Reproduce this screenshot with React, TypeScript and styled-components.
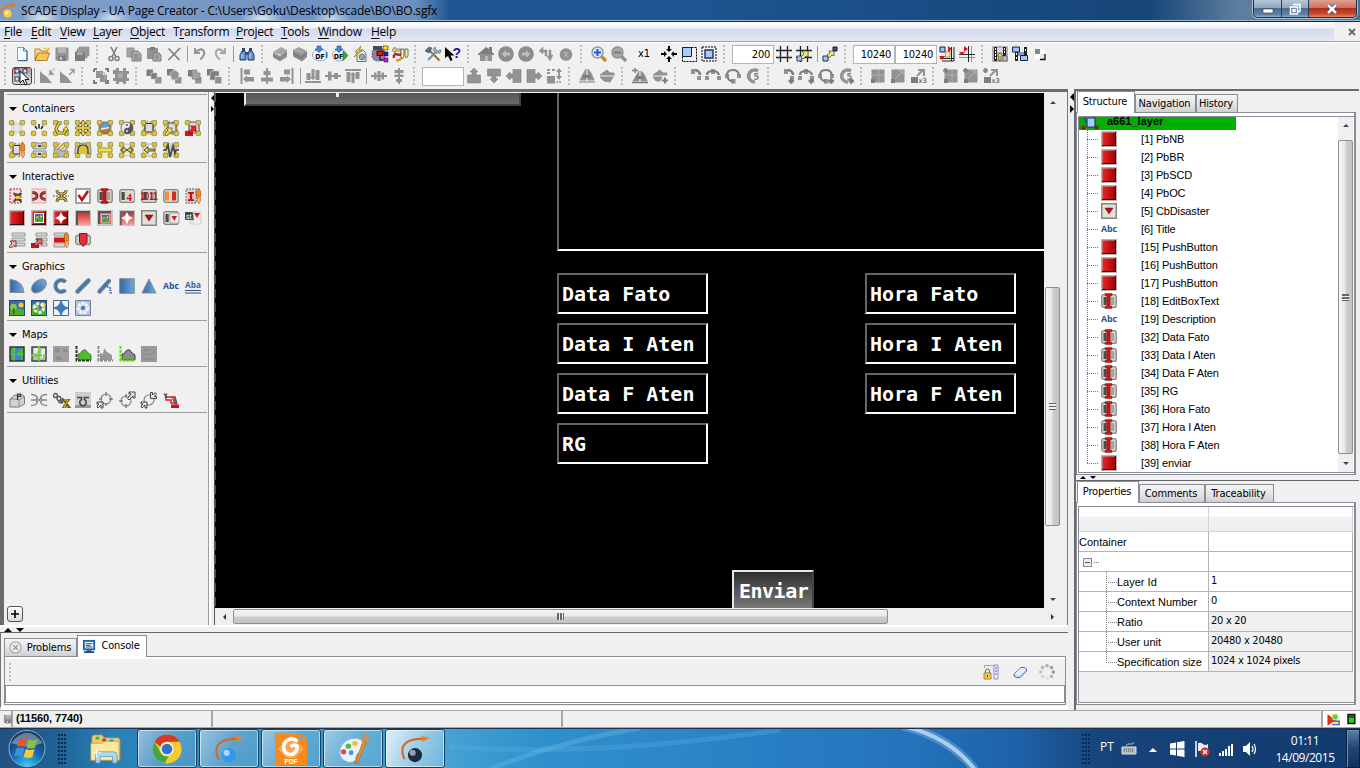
import React from 'react';
import styled, { createGlobalStyle, css } from 'styled-components';

const Global = createGlobalStyle`
  * { box-sizing: border-box; }
  html, body { margin: 0; padding: 0; overflow: hidden; background: #f0f0f0; }
  body { font-family: "DejaVu Sans Condensed", "DejaVu Sans", sans-serif; font-size: 11px; color: #000; }
`;

const UI = '"DejaVu Sans Condensed", "DejaVu Sans", sans-serif';
const SEGOE = '"Open Sans", "Noto Sans", sans-serif';
const ARIAL = '"Liberation Sans", Arial, sans-serif';

/* ---------- icon drawings, all on a 16x16 grid ---------- */

const G = '#939393';
const D = '#7d7d7d';
const B = '#3f78b8';

const Corners = ({ c = '#dcc636' }: { c?: string }) => (
  <g fill={c} stroke="#8f8458" strokeWidth=".8">
    <rect x=".4" y=".4" width="4.4" height="4.4" rx=".8" />
    <rect x="11.2" y=".4" width="4.4" height="4.4" rx=".8" />
    <rect x=".4" y="11.2" width="4.4" height="4.4" rx=".8" />
    <rect x="11.2" y="11.2" width="4.4" height="4.4" rx=".8" />
  </g>
);

const Hatch = () => (
  <>
    <path d="M1 1h14v14H1z" fill="#f1ead0" />
    <path d="M1 7 7 1M1 11 11 1M1 15 15 1M5 15 15 5M9 15l6-6" stroke="#b99a3c" strokeWidth="1.3" fill="none" />
  </>
);

const Grad = ({ id, a, b, h }: { id: string; a: string; b: string; h?: boolean }) => (
  <linearGradient id={id} x1="0" y1="0" x2={h ? '1' : '0'} y2={h ? '0' : '1'}>
    <stop offset="0" stopColor={a} />
    <stop offset="1" stopColor={b} />
  </linearGradient>
);

const EditFrame = () => (
  <>
    <rect x=".8" y="1.6" width="14.4" height="12.8" rx="2" fill="#dcdcd4" stroke="#85857c" strokeWidth="1.3" />
    <rect x="2.5" y="4" width="3.2" height="8" fill="#4c4c48" />
    <rect x="9.5" y="4" width="3.8" height="8" fill="#a4a49c" />
  </>
);

const Picture = ({ x = 0, y = 0, s = 1 }: { x?: number; y?: number; s?: number }) => (
  <g transform={`translate(${x} ${y}) scale(${s})`}>
    <path d="M0 0h16v16H0z" fill="#3b6ea8" />
    <path d="M0 10q8-3 16 0v6H0z" fill="#4fae28" />
    <circle cx="12" cy="5" r="2.5" fill="#ffc53a" />
    <circle cx="4.5" cy="7" r="3.3" fill="#7fcf4a" />
    <path d="M4 8h1.500v6H4z" fill="#66471c" />
  </g>
);

const RedSq = () => (
  <>
    <path d="M0 0h16v16H0z" fill="#b5b5ad" />
    <path d="M15 1v14H1v-1h13V1z" fill="#301010" />
    <path d="M1.500 1.500h12.500V14H1.500z" fill="url(#gRed)" />
  </>
);

const Star = ({ f = '#fff', s = 1 }: { f?: string; s?: number }) => (
  <path transform={`translate(${8 - 8 * s} ${8 - 8 * s}) scale(${s})`} d="M8 2 10 6 14 8 10 10 8 14 6 10 2 8 6 6z" fill={f} />
);

const Pair = ({ a, b }: { a: [number, number]; b: [number, number] }) => (
  <>
    <rect x={a[0]} y={a[1]} width="6.5" height="6.5" fill={D} />
    <rect x={b[0]} y={b[1]} width="6.5" height="6.500" fill={G} />
  </>
);

const Brush = () => (
  <>
    <path d="M13.500 0l2 3v6h-4V3z" fill="#f08820" stroke="#a04a08" strokeWidth=".6" />
    <path d="M12 10h3.500v3l-1.700 3L12 13z" fill="#f5b868" stroke="#a04a08" strokeWidth=".5" />
  </>
);

const icons: Record<string, React.ReactNode> = {
  newDoc: (<><path d="M3.500 1.500h6l3.500 3.500v9.500h-9.500z" fill="#f5f9ff" stroke="#8a9ab4" /><path d="M9.500 1.500v3.500H13z" fill="#c9daef" stroke="#4f6f9c" strokeWidth=".8" /><path d="M13 5v9.700H4" stroke="#2f5a8c" fill="none" /></>),
  open: (<><path d="M1 5V3h5l1 2h6v3H4l-3 6z" fill="#fbd983" stroke="#9c6a1e" strokeWidth=".8" /><path d="M1 14.500 4 7h11.500L13 14.500z" fill="#f9c64f" stroke="#9c6a1e" strokeWidth=".8" /><path d="M9 3.500q3-3 5 .5M14.500 2v2.500H12" stroke="#e5a93a" fill="none" /></>),
  save: (<><path d="M1.500 1.500h13v13h-13z" fill={G} /><path d="M4 2h8v5H4z" fill="#b4b4b4" /><path d="M4 10h8v5H4z" fill={D} /><path d="M6 11h2v3H6z" fill="#ccc" /></>),
  saveAll: (<><path d="M5 1h10v9H5z" fill="#a2a2a2" stroke={D} strokeWidth=".6" /><path d="M3 3h10v9H3z" fill="#a2a2a2" stroke={D} strokeWidth=".6" /><path d="M1 5.500h10V15H1z" fill={D} /><path d="M3 6h6v3H3z" fill="#a8a8a8" /></>),
  cut: (<><path d="M5 1l5 10M11 1 6 11" stroke={D} strokeWidth="1.600" /><circle cx="5" cy="12.500" r="2" fill="none" stroke={D} strokeWidth="1.500" /><circle cx="11" cy="12.500" r="2" fill="none" stroke={D} strokeWidth="1.500" /></>),
  copy: (<><path d="M1 2h7v9H1z" fill="#a4a4a4" stroke={G} /><path d="M6 5h6l3 3v7H6z" fill="#acacac" stroke={D} /><path d="M8 9h5M8 11h5M8 13h5" stroke={D} /></>),
  paste: (<><path d="M1 2h11v11H1z" fill={G} /><path d="M4 1h5v3H4z" fill={D} /><path d="M7 7h6l2 2v6H7z" fill="#acacac" stroke={D} /><path d="M9 10h4M9 12h4" stroke={D} /></>),
  del: <path d="M2.500 2.500 13.500 14M14 2 2.500 14" stroke={D} strokeWidth="1.700" />,
  undo: <path d="M3 2v5h5M3.500 6.500Q8 1.500 11.500 4.500Q14 9 8 13.500" stroke={G} strokeWidth="2" fill="none" />,
  redo: <path d="M13 2v5H8M12.500 6.500Q8 1.500 4.500 4.500Q2 9 8 13.500" stroke="#a8a8a8" strokeWidth="2" fill="none" />,
  find: (<><path d="M3 2h3v3H3zM10 2h3v3h-3z" fill="#2c4a7c" /><path d="M3 5h3l1 3v6H1V9zM10 5h3l2 4v5H9V8z" fill="#6d95cc" stroke="#223e6c" strokeWidth="1" /><path d="M6 6h4v3H6z" fill="#31538c" /><path d="M3 8v4M11 8v4" stroke="#d5e5fa" /></>),
  cubeStack: (<><path d="M1 6l8-5 6 3-6 5z" fill="#a6a6a6" /><path d="M1 6l7 4 7-6v7l-7 4.500-7-4z" fill={G} /><path d="M1 9l7 4 7-6" stroke="#777" fill="none" /></>),
  cubeStack2: (<><path d="M1 4l6-3 8 4-6 5z" fill="#a2a2a2" /><path d="M1 4l8 5 6-4v6l-5 4.500-9-5z" fill="#8a8a8a" /><path d="M1 7l8 5 6-5" stroke="#747474" fill="none" /></>),
  df1: (<><ellipse cx="8" cy="9" rx="7.500" ry="6" fill="#f0f4fb" stroke="#98a8c8" /><text x="8" y="12.500" fontSize="7" fontWeight="bold" textAnchor="middle" fontFamily="DejaVu Sans Condensed">DF</text><path d="M5 0h4v3h2L7 6.500 3 3h2z" fill="#3f88e8" stroke="#173a80" strokeWidth=".5" /><path d="M14.500 6v6" stroke="#3c68c0" strokeWidth="1.500" /></>),
  df2: (<><ellipse cx="7.500" cy="9" rx="7" ry="6" fill="#f0f4fb" stroke="#98a8c8" /><text x="6.500" y="12.500" fontSize="7" fontWeight="bold" textAnchor="middle" fontFamily="DejaVu Sans Condensed">DF</text><path d="M5 0h4v3h2L7 6.500 3 3h2z" fill="#3f88e8" stroke="#173a80" strokeWidth=".5" /><path d="M11 5l5 4.500-5 5z" fill="#30b020" stroke="#166a10" strokeWidth=".6" /></>),
  pageBolt: (<><path d="M5 4h6l3 3v8.500H5z" fill="#e9eef2" stroke="#63727c" /><circle cx="10" cy="11" r="3" fill="#8aa9a5" stroke="#555" strokeWidth=".6" /><path d="M9 0 3 6h3l-4 5 8-6H7z" fill="#f8d838" stroke="#7c6a18" strokeWidth=".6" /></>),
  chip: (<><path d="M2 2h8v3H2z" fill="#333" /><rect x="0" y="2" width="13" height="13" rx="5" fill="#8a80a0" stroke="#444" strokeWidth=".6" strokeDasharray="2 1" /><path d="M1 0h9v4H1z" fill="#4a4a4a" /><path d="M11 0h5v4h-5z" fill="#ffe400" stroke="#000" strokeWidth=".5" /><path d="M5 5h6v4.500H5z" fill="#f01010" stroke="#000" strokeWidth=".8" /><path d="M12 6h4v4h-4z" fill="#2020e0" stroke="#000" strokeWidth=".5" /><path d="M12 12h4v4h-4z" fill="#e010e0" stroke="#000" strokeWidth=".5" /><path d="M8 9.500V14h4" stroke="#000" fill="none" /></>),
  snake: (<><path d="M0 4 3 1v2h6v2H3v2z" fill="#ffe020" stroke="#3c3cb0" strokeWidth=".6" /><path d="M2 12Q1 7 6 8.500q4 1 4-3" stroke="#c02040" strokeWidth="2.500" fill="none" /><path d="M4 14.500q5 0 6-4" stroke="#d8a020" strokeWidth="2.500" fill="none" /><path d="M9 3h3v8l-1.500 2L9 11zM13 3h3v7l-1.500 2L13 10z" fill="#f6eca0" stroke="#444" strokeWidth=".7" /></>),
  tools: (<><path d="M4 4l10.500 10.500" stroke="#a8691f" strokeWidth="2" /><path d="M12 5 3 14" stroke="#6f8fae" strokeWidth="2" /><path d="M0 5 4 1l3 1-3 5z" fill="#5a7088" stroke="#2c3e50" strokeWidth=".5" /><path d="M10 1l1 3 2 1 3-1-1 3-4 0-3-3z" fill="#9fb6cc" stroke="#44596e" strokeWidth=".6" /></>),
  helpCursor: (<><path d="M0 1v11l3-2 2.500 5 2-1-2-4.500h4z" fill="#000" /><text x="7.500" y="12" fontSize="14" fontWeight="bold" fill="#16169c" fontFamily="Liberation Sans">?</text></>),
  home: (<><path d="M0 8 8 1l3 2V1h3v5l2 2v1H0z" fill={D} /><path d="M2 8h12v7H2z" fill={G} /><path d="M7 10h3v5H7z" fill="#b8b8b8" /></>),
  back: (<><circle cx="8" cy="8" r="7.800" fill="#8c8c8c" /><path d="M3.500 8 8 4v2.500h4v3H8V12z" fill="#bdbdbd" /></>),
  fwd: (<><circle cx="8" cy="8" r="7.800" fill="#8c8c8c" /><path d="M12.500 8 8 4v2.500H4v3h4V12z" fill="#bdbdbd" /></>),
  refresh: (<path d="M1 5l4-4v3h4v6H7V6H5v2zM15 9l-3 6-3-5h2V4h2v5z" fill={G} stroke={G} strokeWidth=".5" />),
  stop: (<><circle cx="8" cy="8.500" r="6.300" fill="#929292" /><path d="M6 6 10 11M10 6 6 11" stroke="#b4b4b4" strokeWidth="1.200" /></>),
  zoomIn: (<><path d="M10 10l5 5" stroke="#c98d17" strokeWidth="3.200" /><circle cx="6.500" cy="6.500" r="5.500" fill="#d7e8fb" stroke="#8496ae" strokeWidth="1.400" /><path d="M6.500 3v7M3 6.500h7" stroke="#2b57c8" strokeWidth="2" /></>),
  zoomOut: (<><path d="M10 10l5 5" stroke="#909090" strokeWidth="3.200" /><circle cx="6.500" cy="6.500" r="5.500" fill="#a8a8a8" stroke="#909090" strokeWidth="1.400" /><path d="M3 6.500h7" stroke="#7a7a7a" strokeWidth="2" /></>),
  fit: (<path d="M7 0h2v3h2L8 6 5 3h2zM7 16h2v-3h2L8 10l-3 3h2zM0 7v2h3v2l3-3-3-3v2zM16 7v2h-3v2l-3-3 3-3v2z" fill="#000" />),
  sel1: (<><path d="M1.500 1.500h14v14h-14z" fill="none" stroke="#000" strokeDasharray="2 1" /><path d="M1.500 1.500h9v9h-9z" fill="#a9cdf8" stroke="#102040" /></>),
  sel2: (<><path d="M1 1h14v14H1z" fill="none" stroke="#000" strokeDasharray="2 1" /><path d="M4 4h8v8H4z" fill="#a9cdf8" stroke="#203060" strokeWidth="1.400" /></>),
  grid: (<path d="M4.500 0v16M11.500 0v16M0 4.500h16M0 11.500h16" stroke="#222" strokeWidth="1.300" />),
  gridSnap: (<><path d="M4.500 0v16M11.500 0v16M0 4.500h16M0 11.500h16" stroke="#222" strokeWidth="1.300" /><path d="M1 10h5v5H1z" fill="#9cc8f8" stroke="#124" strokeWidth=".8" /><path d="M5 11 8 8 6 5h6v6l-2-1-3 3z" fill="#ffe87a" stroke="#333" strokeWidth=".7" /></>),
  snapObj: (<><path d="M11 1h4v4h-4z" fill="#38587c" stroke="#123" /><path d="M1 10h5v5H1z" fill="#9cc8f8" stroke="#234" strokeWidth="1" /><path d="M5 9 8 7 7 5h5v5l-2-1-3 3z" fill="#ffe87a" stroke="#333" strokeWidth=".7" /></>),
  origin1: (<><path d="M12.500 1v14M15 1v14M1 12.500h14M3 15h12" stroke="#222" /><path d="M1 1h5v5H1z" fill="#9cc8f8" stroke="#124" /><path d="M9 0l4 3-4 3zM0 10h6l-3 4z" fill="#e01010" /><path d="M5 5l3 1 3-1v6H6l1-3z" fill="#fff2a0" stroke="#333" strokeWidth=".5" /></>),
  origin2: (<><path d="M12.500 0v16M0 11.500h16" stroke="#a088a0" /><path d="M9.500 0v16M0 8.500h16" stroke="#222" /><path d="M5 0l4 3-4 3zM0 6h6L3 9z" fill="#e01010" /></>),
  film1: (<><path d="M0 0h16v16H0z" fill="#b0b0b0" /><path d="M2 1h3v14H2zM11 1h3v10h-3z" fill="#222" /><path d="M3 2h1v2H3zM3 5h1v2H3zM3 8h1v2H3zM3 11h1v2H3zM12 2h1v2h-1zM12 5h1v2h-1z" fill="#fff" /><path d="M5 2h6v4H5zM5 8h6v4H5z" fill="#d8d8f0" /><path d="M8 7l3 3H9v5H7v-5H5z" fill="#f8e038" stroke="#222" strokeWidth=".6" /><path d="M11 10h4v5h-4z" fill="#c8b8e0" stroke="#555" strokeWidth=".7" /></>),
  film2: (<><path d="M3 1h3v14H3zM12 1h3v14h-3z" fill="#222" /><path d="M4 7h1v2H4zM4 11h1v2H4zM13 3h1v2h-1z" fill="#fff" /><path d="M6 6h6v4H6z" fill="#9a92b8" /><path d="M.5 1h7v5h-7zM8.500 9.500h7v5h-7z" fill="#9cc8f8" stroke="#124" /></>),
  corner: (<><path d="M3 3h5v5H3z" fill="#888" /><path d="M8 8h5v5H8z" fill="#e8e8e8" /><path d="M8 3h5v5H8z" fill="#fff" /><path d="M3 8h5v5H3z" fill="#fff" /><path d="M13 8v5.500H8" stroke="#111" strokeWidth="1.300" fill="none" /></>),
  pointer: (<><path d="M1 1h4v4H1zM9 1h4v4H9zM1 9h4v4H1z" fill="#d6e3f2" stroke="#31527c" strokeWidth="1.200" /><path d="M0 .500h3M10 .500h3M0 5h2" stroke="#c01c1c" strokeWidth="1.500" /><path d="M6 3v12l3-3 2 5 2-1-2-4.500h4z" fill="#fff" stroke="#000" strokeWidth=".9" /></>),
  fillA: (<><path d="M1 3v12h12L8 9 4 6z" fill={G} /><path d="M10 7l3-3M11 2v4h4" stroke={G} strokeWidth="1.300" fill="none" /><path d="M12 4l4-4" stroke={G} strokeDasharray="1 1" strokeWidth="1.300" /></>),
  fillB: (<><path d="M1 3v12h12L8 9 4 6z" fill={G} /><path d="M10 7l5-5M11 1.500h4v4" stroke={G} strokeWidth="1.300" fill="none" /></>),
  group: (<><path d="M3 3h7v7H3zM7 7h7v7H7z" fill={G} /><path d="M1 1h3M1 1v3M12 1h3v3M1 12v3h3M15 12v3h-3" stroke={D} strokeWidth="2" fill="none" /><path d="M6 5h6v6" stroke="#b0b0b0" fill="none" /></>),
  ungroup: (<><path d="M3 3h10v10H3z" fill={G} /><path d="M0 2h3V0h3v3h4V0h3v3h3v3h-2v4h2v3h-3v3h-3v-2H6v2H3v-3H0v-3h2V6H0z" fill="#929292" /><path d="M5 5h5v5H5z" fill="#a8a8a8" /></>),
  ord1: (<><Pair a={[0.5, 1.5]} b={[9, 9]} /><path d="M5 5h6v6H5z" fill={D} stroke="#c6c6c6" strokeWidth=".7" /></>),
  ord2: (<><Pair a={[1, 1]} b={[9, 9]} /><path d="M4 5 9 2l4 3-1 6-6 1z" fill={G} stroke="#c6c6c6" strokeWidth=".7" /></>),
  ord3: (<><Pair a={[2, 2]} b={[9, 9]} /><path d="M6 2h5v3h3v6H6z" fill="#a3a3a3" stroke={D} strokeWidth=".7" /></>),
  ord4: (<><Pair a={[1, 1]} b={[9, 9]} /><path d="M5 3h8v5h-4v4H4V8z" fill={D} stroke="#c6c6c6" strokeWidth=".7" /></>),
  alL: (<path d="M1.500 0v16H3.500V0zM5 1.500h6v5H5zM4 11l4-3.500V9h7v4.500H8V15z" fill={G} />),
  alC: (<path d="M7 0h2v16H7zM4.500 3h7v4h-7zM2 9.500h12v4H2z" fill={G} />),
  alR: (<path d="M12.500 0v16h2V0zM5 1.500h6v5H5zM12 11 8 7.500V9H1v4.500h7V15z" fill={G} />),
  alB: (<path d="M0 13h16v2H0zM1.500 5h4v7h-4zM10.500 2h4v10h-4zM8 12l-3-3h1.500V1h3v8H11z" fill={G} />),
  alM: (<path d="M0 7h16v2H0zM3 3.500h3.500v9H3zM9 5h4v6H9z" fill={G} />),
  alT: (<path d="M0 1h16v2H0zM1.500 4h4v10h-4zM10.500 4h4v7h-4zM8 4 5 7h1.500v8h3V7H11z" fill={G} />),
  dH: (<path d="M0 7h16v2H0zM3 4.500h2.500v7H3zM6.500 3h3v10h-3zM10.500 4.500H13v7h-2.500z" fill={G} />),
  dV: (<path d="M7 0h2v16H7zM3.500 2h9v3h-9zM3.500 6.500h9v2.500h-9zM5 11h6v3H5z" fill={G} />),
  rotU: (<path d="M8 0l4 4h-2v3h4.500v8h-13V7H6V4H4z" fill={G} stroke={D} strokeWidth=".6" />),
  rotD: (<path d="M1.500 1h13v7H10v3h2l-4 4-4-4h2V8H1.500z" fill={G} stroke={D} strokeWidth=".6" />),
  rotL: (<path d="M0 8l4-4v2h3V1.500h8v13H7V10H4v2z" fill={G} stroke={D} strokeWidth=".6" />),
  rotR: (<path d="M16 8l-4-4v2H9V1.500H1v13h8V10h3v2z" fill={G} stroke={D} strokeWidth=".6" />),
  rotX: (<><path d="M1 8h8v7.500H1z" fill={G} /><path d="M1 1h3v2H1zM6 1h3v2H6zM1 4h3v2H1zM10 4l3-4 3 4h-2v4h2l-3 4-3-4h2V4z" fill={G} /><path d="M10 14h5" stroke={G} strokeWidth="1.500" strokeDasharray="2 1" /></>),
  flipH: (<><path d="M7 1 1 12h6zM9 1v11h6L12 5z" fill={G} stroke={G} /><path d="M4 7h8v3H4z" fill={D} /><path d="M0 14h16" stroke={D} /></>),
  flipV: (<><path d="M1 7 8 2l3 3 4 0v2zM1 9h13l-3 5-6-1z" fill={G} stroke={G} /><path d="M5 8h11" stroke="#c0c0c0" /></>),
  flipH2: (<><path d="M7 3 1 13h6zM9 3v10h6L12 6z" fill={G} stroke={G} /><path d="M4 8h8v3H4z" fill={D} /><path d="M0 2.500h6M3 0v5M0 14.500h16" stroke={D} strokeWidth="1.500" /></>),
  flipV2: (<><path d="M1 7 8 2l3 3 4 0v2zM1 9h9l-2 4-4 0z" fill={G} stroke={G} /><path d="M10 12.500h6M13 9.500v6" stroke={D} strokeWidth="2" /></>),
  arc1: (<><path d="M6 1h4v5H6zM12 8h4v4h-4z" fill={G} /><path d="M10 2q5 1 5 5" stroke={D} strokeWidth="2.500" fill="none" /></>),
  arc2: (<><path d="M0 8h4v4H0zM12 8h4v4h-4zM6 1h4v5H6z" fill={G} /><path d="M2 7q0-4 6-4 5 0 6 4" stroke={D} strokeWidth="2.200" fill="none" /></>),
  arc3: (<><path d="M0 6h4v4H0zM12 6h4v4h-4zM6 11h4.500v4.500H6z" fill={G} /><path d="M2 7q0-5 6-5 5 0 6 5M2.500 9q1 4 5 4" stroke={D} strokeWidth="2" fill="none" /></>),
  arc4: (<><path d="M13 3A6 6 0 1 0 10 14" stroke={G} strokeWidth="3.500" fill="none" /><text x="8.500" y="12" fontSize="9" fontWeight="bold" fill={D} fontFamily="DejaVu Sans Condensed">5</text></>),
  sc1: (<><path d="M1.500 1.500h13v13h-13z" fill={G} /><path d="M9 2v12M2 7h12" stroke="#b4b4b4" strokeWidth=".8" /><path d="M1 11h4v4H1z" fill={D} /></>),
  sc2: (<><path d="M1.500 1.500h13v13h-13z" fill={G} /><path d="M5 11l8-8M9 3h4v4" stroke="#b4b4b4" strokeWidth="1" fill="none" /><path d="M1 11h4v4H1z" fill={D} /></>),
  sc3: (<><path d="M1 9h7v6H1z" fill={D} /><path d="M7 8l6-6M8 2h6v6" stroke={G} strokeWidth="2" fill="none" /><text x="8.500" y="15" fontSize="7" fontWeight="bold" fill={D} fontFamily="DejaVu Sans Condensed">x3</text></>),
  plusDot: (<path d="M10.500 13h5.500M13.200 10.200v5.600" stroke={D} strokeWidth="2.400" />),
  plusTL: (<path d="M0 2.500h5M2.500 0v5" stroke={D} strokeWidth="2.200" />),

  c1: (<><path d="M3 3h10v10H3zM5 2v12M11 2v12M2 5h12M2 11h12" stroke="#ccccc4" fill="#ebebeb" strokeWidth=".8" /><Corners /></>),
  c2: (<><path d="M4 6l2 3M8 4v4.500M12 6l-2 3" stroke="#222" strokeWidth="1.500" /><Corners /></>),
  c3: (<><Corners /><path d="M9 3H6L3 8.500l2 4.500h6l2-4" stroke="#5a5018" strokeWidth="3.200" fill="none" /><path d="M10 9.500 13.500 6l2 5z" fill="#f0d840" stroke="#5a5018" strokeWidth=".7" /><path d="M9 3H6L3 8.500l2 4.500h6l2-4" stroke="#f0d840" strokeWidth="1.600" fill="none" /></>),
  c4: (<><Corners /><path d="M8 0l3 3.500H9.300v3.200h3.200V5L16 8l-3.500 3V9.300H9.300v3.200H11L8 16l-3-3.500h1.700V9.300H3.500V11L0 8l3.500-3v1.700h3.200V3.500H5z" fill="#f0d840" stroke="#4a4210" strokeWidth=".8" /></>),
  c5: (<><path d="M1.500 1.500h13v13h-13z" fill="#a08c4c" /><Corners /><ellipse cx="8" cy="8" rx="4" ry="5.500" fill="#c8742c" stroke="#555" strokeWidth=".6" /><path d="M4 8q0-5.500 4-5.500T12 8z" fill="#5a9ee0" /><path d="M4 8l8-1v1.500L4 10z" fill="#dfe8ee" /></>),
  c6: (<><Corners /><circle cx="8" cy="8" r="6" fill="#e8e8e8" stroke="#777" /><path d="M8 2a6 6 0 010 12 3 3 0 010-6 3 3 0 000-6" fill="#555" /><circle cx="8" cy="5" r="1" fill="#555" /><circle cx="8" cy="11" r="1" fill="#eee" /></>),
  c7: (<><Hatch /><path d="M4 3.500h8V12H4z" fill="#dcdce0" stroke="#333" strokeWidth="1.200" /><Corners /></>),
  c8: (<><Hatch /><path d="M5 3h8v9H5z" fill="#dcdce0" stroke="#444" /><Corners /><path d="M2 14 5 10 3 8h6v6L7.500 12l-4 4z" fill="#f0dc40" stroke="#555" strokeWidth=".7" /></>),
  c9: (<><path d="M4 2h10v11H4z" fill="#eadad4" stroke="#555" strokeWidth="1.200" /><Corners /><path d="M0 11h8v5H0z" fill="#d01818" /><path d="M4 12l3-4-1.500-2H11v6l-2-1.500L5 14z" fill="#e02828" stroke="#700" strokeWidth=".6" /></>),
  c10: (<><Hatch /><path d="M4 3.500h7V12H4z" fill="#dcdce0" stroke="#333" /><Corners /><path d="M11 0h5v16h-5z" fill="#f0f0f0" /><Brush /></>),
  c11: (<><path d="M2 1h13v6H2zM2 9h13v6H2z" fill="#d4d4d0" stroke="#777" strokeWidth=".8" /><Corners /><path d="M7 3h3v2H7zM7 11h3v2H7z" fill="#444" /></>),
  c12: (<><Hatch /><path d="M1 7h5l2 2h7v6H1z" fill="#b8b8b8" stroke="#777" strokeWidth=".7" /><Corners /></>),
  c13: (<><path d="M0 12V7q1-6 8-6t8 6v5" fill="#c8c8bc" stroke="#888" /><Corners /><path d="M3 12V7q1-4 5-4t5 4v5" fill="#dcc436" stroke="#333" strokeWidth="1.200" /></>),
  c14: (<><path d="M4 10h12v6H4z" fill="#f8efb4" /><Corners /><path d="M1 6h14v4H1z" fill="#f3df50" stroke="#8a7a20" strokeWidth=".8" /></>),
  c15: (<><path d="M2 2h12v12H2z" fill="#e6e6de" stroke="#bbb" strokeWidth=".6" /><Corners /><path d="M2 7h2V5l4 3-4 3V9H2zM14 7h-2V5L8 8l4 3V9h2z" fill="#e8d030" stroke="#443c10" strokeWidth=".9" /></>),
  c16: (<><path d="M2 2h12v12H2z" stroke="#aaa" fill="#eee" /><Corners /><path d="M3 8l4-3.500V7h7v2H7v2.500z" fill="#e8d030" stroke="#443c10" strokeWidth=".9" /></>),
  c17: (<><path d="M1 1h14v14H1z" fill="#d2d2ca" /><Corners /><path d="M0 8h3l2-5 2 12 3-11 2 7 1-3h3" stroke="#444" strokeWidth="1.700" fill="none" /></>),

  i1: (<><path d="M1 1h11v14H1z" fill="#fbd9d9" stroke="#c02020" strokeDasharray="2 1" /><path d="M4.500 5q4 3.500 8 0M4.500 14q4-5 8 0M5 6l7 7M12 6l-7 7" stroke="#554a2a" strokeWidth="1.800" fill="none" /><path d="M7 8h3.500v3H7z" fill="#e8cc40" /></>),
  i2: (<><path d="M1 1h14v14H1z" fill="#fbd9d9" stroke="#e0a8a8" /><path d="M1.500 4.500Q6 5 6 8T1.500 11.500M14.500 4.500Q10 5 10 8t4.500 3.500" stroke="#333" strokeWidth="2.800" fill="none" /><path d="M2 4.500Q6 5 6 8t-4 3.500M14 4.500Q10 5 10 8t4 3.500" stroke="#d03030" strokeWidth="1.400" fill="none" /></>),
  i3: (<><path d="M0 8h16" stroke="#555" strokeDasharray="2 1" /><path d="M4 2q0 4 4.500 4T13 2M4 14q0-4 4.500-4t4.500 4M8.500 5v6" stroke="#4c4420" strokeWidth="2.800" fill="none" /><path d="M4 2q0 4 4.500 4T13 2M4 14q0-4 4.500-4t4.500 4M8.500 5v6" stroke="#d8bc38" strokeWidth="1.300" fill="none" /></>),
  i4: (<><path d="M1 1h14v14H1z" fill="#fff" stroke="#888" strokeWidth="1.500" /><path d="M3.500 7 7 12l6-9" stroke="#b81414" strokeWidth="2.600" fill="none" /></>),
  i5: (<><EditFrame /><path d="M4 .500h7v2.300H9.200v10.400H11v2.300H4v-2.300h1.800V2.800H4z" fill="#d01018" stroke="#701010" strokeWidth=".4" /></>),
  i6: (<><EditFrame /><path d="M7 3h8v10H7z" fill="#dad6d0" /><text x="7.500" y="12.500" fontSize="11" fontWeight="bold" fill="#c01018" fontFamily="Liberation Serif">4</text></>),
  i7: (<><EditFrame /><text x="-.5" y="12" fontSize="10" fontWeight="bold" fill="#b01018" fontFamily="Liberation Sans" textLength="17" lengthAdjust="spacingAndGlyphs">1011</text></>),
  i8: (<><EditFrame /><path d="M2.500 3.500h3.500v9H2.500z" fill="#f09040" /><path d="M9 3.500h4v9H9z" fill="#d82820" /></>),
  i9: (<><path d="M1 1h10v14H1z" fill="#d6d2ce" stroke="#888" strokeDasharray="2 1" strokeWidth="1.300" /><path d="M3 4h6v1.800H7.200v5.400H9V13H3v-1.800h1.800V5.800H3z" fill="#c01018" /><Brush /></>),
  i10: <RedSq />,
  i11: (<><RedSq /><path d="M3 3h10v10H3z" fill="#fff" /><Picture x={4} y={4} s={0.5} /></>),
  i12: (<><RedSq /><Star /></>),
  i13: (<><path d="M0 0h16v16H0z" fill="#c5c5bd" /><path d="M1 1h14v2H3v12H1z" fill="#555" /><path d="M3 3h12v12H3z" fill="url(#gPink)" /></>),
  i14: (<><path d="M0 0h16v16H0z" fill="#c5c5bd" /><path d="M1 1h13v2H3v11H1z" fill="#555" /><path d="M3 3h11v11H3z" fill="#f06868" /><path d="M4.500 4.500h8v8h-8z" fill="#fff" /><Picture x={5} y={5} s={0.45} /></>),
  i15: (<><path d="M0 0h16v16H0z" fill="#c5c5bd" /><path d="M1 1h14v2H3v12H1z" fill="#666" /><path d="M3 3h12v12H3z" fill="url(#gPink)" /><Star /></>),
  i16: (<><path d="M.7.700h14.600v14.600H.7z" fill="#dededa" stroke="#85857d" strokeWidth="1.400" /><path d="M4 5h8l-4 6z" fill="#b01018" stroke="#70080c" strokeWidth=".5" /></>),
  i17: (<><EditFrame /><path d="M7 3h9v10H7z" fill="#e8e8e4" stroke="#999" strokeWidth=".8" /><path d="M8.500 6H14l-2.700 5z" fill="#c82028" /></>),
  i18: (<><path d="M0 2h9v8H0z" fill="#4a4a46" /><text x="1" y="8.500" fontSize="7" fill="#fff" fontFamily="Liberation Sans">st</text><path d="M8 2h8v12H5v-3h4z" fill="#eee" stroke="#bbb" strokeWidth=".6" /><path d="M9 3h6l-3 5z" fill="#d01820" /></>),
  i19: (<><path d="M3 1h13v3H3zM3 6h13v3H3zM3 11h13v3H3z" fill="#d8d8d0" stroke="#888" strokeWidth=".8" /><path d="M0 15 3 11 1 9h6v6l-2-1.500L2 16z" fill="#f0b8b8" stroke="#602020" strokeWidth=".8" /></>),
  i20: (<><path d="M5 1h11v3H5zM5 6h11v3H5zM7 11h9v3H7z" fill="#d8d8d0" stroke="#888" strokeWidth=".8" /><path d="M0 11h8v5H0z" fill="#c81018" /><path d="M3 13l4-5-2-1h6v6L9 11l-4 3z" fill="#e07070" stroke="#602020" strokeWidth=".8" /></>),
  i21: (<><path d="M1 1h11v3H1zM1 11h11v4H1z" fill="#d4d4cc" stroke="#888" strokeWidth=".8" /><path d="M1 5.500h11v5H1z" fill="#d81018" /><Brush /></>),
  i22: (<><rect x=".7" y="3.500" width="14.600" height="9" rx="2" fill="#d4d4cc" stroke="#888" strokeWidth="1.300" /><path d="M4.500 1.500h7.500v9l-3.700 4-3.800-4z" fill="#e03038" stroke="#901018" /></>),

  g1: (<path d="M1 1.500h1Q14 3 15 14.500H1z" fill="url(#gBlue)" stroke="#7f8f98" />),
  g2: (<ellipse cx="8" cy="8" rx="8.500" ry="5.500" transform="rotate(-40 8 8)" fill="url(#gBlue)" stroke="#7f8f98" />),
  g3: (<><path d="M12.500 4A5.800 5.800 0 1 0 12.500 12" stroke="#7f8f98" strokeWidth="4.200" fill="none" /><path d="M12.500 4A5.800 5.800 0 1 0 12.500 12" stroke={B} strokeWidth="2.400" fill="none" /></>),
  g4: (<><path d="M2.500 13.500 13.500 2.500" stroke="#7f8f98" strokeWidth="4.600" strokeLinecap="round" /><path d="M2.500 13.500 13.500 2.500" stroke={B} strokeWidth="2.600" strokeLinecap="round" /></>),
  g5: (<><path d="M2.500 13.500 12 3" stroke="#7f8f98" strokeWidth="4.400" strokeLinecap="round" /><path d="M2.500 13.500 12 3" stroke={B} strokeWidth="2.500" strokeLinecap="round" /><path d="M8 7l5 3 1 6" stroke="#3b6090" strokeWidth="2" strokeDasharray="1.500 1" fill="none" /></>),
  g6: (<path d="M.7.700h14.600v14.600H.7z" fill="url(#gBlue)" stroke="#7f8f98" />),
  g7: (<path d="M8 1l7 14H1z" fill="url(#gBlue)" stroke="#7f8f98" />),
  g8: (<text x="0" y="11.300" fontSize="9" fontWeight="bold" fill="#2c5590" textLength="16" lengthAdjust="spacingAndGlyphs" fontFamily="Open Sans">Abc</text>),
  g9: (<><text x="0" y="10.300" fontSize="9" fontWeight="bold" fill="#3f68a0" textLength="16" lengthAdjust="spacingAndGlyphs" fontFamily="Open Sans">Aba</text><path d="M0 12.500h16M0 15h16" stroke="#2c5590" /></>),
  g10: (<><Picture /><path d="M.5.500h15v15H.5z" fill="none" stroke="#23466e" /></>),
  g11: (<><Picture /><circle cx="8" cy="8" r="4.500" fill="none" stroke="#eef" strokeWidth="3" strokeDasharray="3 1.500" /><path d="M.5.500h15v15H.5z" fill="none" stroke="#23466e" /></>),
  g12: (<><path d="M.5.500h15v15H.5z" fill="#eef3f8" stroke="#4a6a90" /><path d="M8 1q1 6 7 7-6 1-7 7-1-6-7-7 6-1 7-7z" fill={B} stroke={B} strokeWidth="1.500" /></>),
  g13: (<><path d="M.5.500h15v15H.5z" fill="#b9c6d6" stroke="#6a83a0" /><circle cx="8" cy="8" r="4.500" fill="none" stroke="#eef5fd" strokeWidth="3.500" strokeDasharray="3 .8" /><circle cx="8" cy="8" r="2" fill={B} /></>),

  m1: (<><path d="M1 1h14v14H1z" fill="#3a86c8" stroke="#333" strokeWidth="1.500" /><path d="M2 2h4l1 3-3 2 3 3-1 4H2zM14 2 9 6l-1 4 4-1v5h2z" fill="#46bc24" /><path d="M5 1v14M1 8h14" stroke="#9ad" strokeWidth=".6" /></>),
  m2: (<><path d="M1 1h14v14H1z" fill="#b9b9b9" stroke="#444" strokeWidth="1.500" /><path d="M3 2h5l-2 5H3zM11 3h3v7l-5 3z" fill="#eee" /><path d="M8 0v16M0 9.500h16" stroke="#60d818" strokeWidth="2.200" strokeDasharray="3 1" /></>),
  m3: (<><path d="M0 0h16v16H0z" fill="#a0a0a0" /><path d="M2 2h5l-1 4-4 1zM10 3h4v4l-4-1zM3 10l6 1v3H3z" fill="#8d8d8d" /></>),
  m4: (<><path d="M3 14V8q2 1 4-3 4-3 5 1l4 3v5z" fill="#48c024" stroke="#555" strokeWidth=".8" /><path d="M1.500 0v14.500H16" stroke="#333" strokeDasharray="3 1" strokeWidth="2" fill="none" /></>),
  m5: (<><path d="M3 14V7l3 1 1-6 3 4 5 3v5z" fill="#969696" /><path d="M1.500 0v14.500H16" stroke="#8a8a8a" strokeDasharray="3 1" strokeWidth="2" fill="none" /></>),
  m6: (<><path d="M3 14V8q2 1 4-3 4-3 5 1l4 3v5z" fill="#8c8c8c" stroke="#333" strokeWidth=".9" /><path d="M1.500 0v14.500H16" stroke="#60d818" strokeDasharray="3 1" strokeWidth="2" fill="none" /></>),
  m7: (<><path d="M0 0h16v16H0z" fill="#9a9a9a" /><path d="M2 11l4-4 3 2 5-5M2 13h12M3 4h5" stroke="#858585" fill="none" /></>),

  u1: (<><path d="M1 7l5-4h8l1.500 2v7L10 15H1z" fill="#d4d4cc" stroke="#777" /><path d="M10 15V9q0-2-3-2H1M10 8l5-3" stroke="#888" fill="none" /><path d="M8.500 8V2h3v2.500H9" stroke="#333" strokeWidth="1.200" fill="none" /></>),
  u2: (<path d="M0 2.500q6 0 6.500 4M0 13.500q6 0 6.500-4M16 2.500q-6 0-6.500 4M16 13.500q-6 0-6.500-4M0 8h6M10 8h6M5 6l3 2-3 2M11 6 8 8l3 2" stroke="#888" strokeWidth="1.300" fill="none" />),
  u3: (<><circle cx="2.500" cy="3.500" r="2" fill="none" stroke="#555" strokeWidth="1.300" /><circle cx="6" cy="6.500" r="2" fill="none" stroke="#555" strokeWidth="1.300" /><path d="M7 8l3 3M10 6l-1 5-4-1" stroke="#555" strokeWidth="1.500" fill="none" /><path d="M10.500 8h5l-4.500 7h5zM15.500 8l-5 7" stroke="#6a5c1c" strokeWidth="2.200" fill="none" /><path d="M11 8h4l-4 7h4" stroke="#e0c438" strokeWidth="1" fill="none" /></>),
  u4: (<><path d="M0 0h16v16H0z" fill="#cfcfc9" /><path d="M0 13h16v3H0z" fill="#999" /><path d="M2 5.500h4.500v2a3.300 3.300 0 103 0v-2H14" stroke="#444" strokeWidth="1.600" fill="none" /></>),
  u5: (<><circle cx="9" cy="7" r="5" fill="none" stroke="#888" strokeWidth="1.200" /><path d="M9 0v4M16 7h-4M9 14v-3M2 7h3" stroke="#555" /><path d="M0 10h6v6H4v-3l-3 3-1-2 2-2H0z" fill="#e4e4e0" stroke="#333" strokeWidth=".9" /></>),
  u6: (<><circle cx="7" cy="9" r="5" fill="none" stroke="#888" strokeWidth="1.200" /><path d="M7 2v4M0 9h4M7 16v-4" stroke="#555" /><path d="M10 0h6v6h-2V4l-4 4-1.500-1.500L12 2h-2z" fill="#e4e4e0" stroke="#333" strokeWidth=".9" /></>),
  u7: (<><circle cx="8" cy="8" r="5" fill="none" stroke="#888" strokeWidth="1.200" /><path d="M9.500 0.500v6h6v-2h-2l2-2.500-1.500-1.500-2.500 2.500v-2.500z" fill="#e4e4e0" stroke="#333" strokeWidth=".9" /><path d="M0 10h6v6H4v-3l-3 3-1-2 2-2H0z" fill="#e4e4e0" stroke="#333" strokeWidth=".9" /></>),
  u8: (<><path d="M3 5h9v6H8V8H3z" fill="none" stroke="#e01820" strokeWidth="1.400" /><path d="M8 12.500h8V16H8z" fill="#d01018" /><path d="M1 1.500l3 4M4 1.500l-2 4M9 5l4 8M12 5l2 7" stroke="#555" strokeWidth="1.400" fill="none" /></>),

  layer: (<><path d="M3 1h9v7H3z" fill="#5d86b8" stroke="#1c3c66" /><path d="M5 4h8v9H5z" fill="#a9cdf8" stroke="#1c3c66" strokeWidth="1.200" /><path d="M0 12h3v3H0zM13 12h3v3h-3z" fill="#a02020" stroke="#401010" strokeWidth=".5" /></>),
  problems: (<><circle cx="8" cy="8" r="6" fill="#eee" stroke="#a8a8a8" strokeWidth="1.300" /><path d="M5.500 5.500l5 5M10.500 5.500l-5 5" stroke="#999" strokeWidth="1.500" /></>),
  console: (<><path d="M1 1h13v11H1z" fill="#1b66ad" /><path d="M3 3h9v7H3z" fill="#f2f8ff" /><path d="M4 5h7M4 6.800h5M4 8.500h7" stroke="#345" /><path d="M5 12h5v1h3v2H2v-2h3z" fill="#1c4f86" /></>),
  lock: (<><path d="M1 1h14v14H1z" fill="#dff0f4" /><path d="M1 1.500h14M1.500 1v3" stroke="#c8a840" /><path d="M11 1h4v14h-4z" fill="#f4f0ff" stroke="#7b76b8" strokeWidth=".8" /><path d="M12 4h2M12 7h2M12 10h2" stroke="#4466b8" /><path d="M1 9h7v6H1z" fill="#f0cc50" stroke="#9a7420" strokeWidth=".8" /><path d="M2.500 9V7a2 2 0 014 0v2" stroke="#8a6a20" fill="none" /><path d="M4 11h1v2H4z" fill="#333" /></>),
  eraser: (<><path d="M2 10 9 3.500q4-1 5.500 1.500v2L8 13.500q-4 1-6-1.500z" fill="#bcd2f0" stroke="#4b6ea8" /><path d="M2.500 10 9 4q4-.5 5 1.500L8 11.500Q4 12 2.500 10z" fill="#e4effd" /></>),
  spinner: (<g>{[0, 1, 2, 3, 4, 5, 6, 7].map((i) => (<circle key={i} cx={8 + 6.3 * Math.cos((i * Math.PI) / 4)} cy={8 + 6.3 * Math.sin((i * Math.PI) / 4)} r="1.800" fill={['#989898', '#b4b4b4', '#dedede', '#d4d4d4', '#c4c4c4', '#b8b8b8', '#b0b0b0', '#a0a0a0'][i]} />))}</g>),
  shapes: (<><path d="M1 2v13l9-6z" fill="#e83020" stroke="#901010" strokeWidth=".6" /><circle cx="10" cy="5" r="3.500" fill="#2ed0a0" stroke="#f0e020" strokeWidth="1.500" /><path d="M8 10h7v4.500H6" fill="#ffe940" stroke="#2040e0" strokeWidth="1.400" /></>),
  status: (<><path d="M3 1h11v14H3z" fill="#111" /><path d="M5 6h7v7H5z" fill="#12e012" /><path d="M5 2.500h7V6H5z" fill="#444" /></>),
};

const Svg = styled.svg<{ $s: number }>`
  width: ${(p) => p.$s}px;
  height: ${(p) => p.$s}px;
  display: block;
  flex: none;
  overflow: visible;
`;

const Icon = ({ n, s = 16 }: { n: string; s?: number }) => (
  <Svg viewBox="0 0 16 16" $s={s}>
    {n.split('+').map((k) => (
      <React.Fragment key={k}>{icons[k]}</React.Fragment>
    ))}
  </Svg>
);

const DefsSvg = styled.svg`
  position: absolute;
  width: 0;
  height: 0;
`;

const Defs = () => (
  <DefsSvg>
    <defs>
      <Grad id="gRed" a="#ec2424" b="#a00408" h />
      <Grad id="gPink" a="#d83030" b="#f8a0a0" />
      <Grad id="gBlue" a="#2f66a6" b="#79a6d8" h />
    </defs>
  </DefsSvg>
);

/* ---------- window frame ---------- */

const Screen = styled.div`
  width: 1360px;
  height: 768px;
  display: flex;
  flex-direction: column;
  background: #f0f0f0;
  overflow: hidden;
`;

const TitleBar = styled.div`
  height: 22px;
  flex: none;
  display: flex;
  align-items: flex-start;
  border-bottom: 1px solid #16233a;
  box-shadow: inset 0 -1px 0 #9fbad8;
  background:
    radial-gradient(ellipse 20px 10px at 42px 18px, #dfe6ec, transparent),
    radial-gradient(ellipse 20px 9px at 112px 18px, #cfdde6, transparent),
    radial-gradient(ellipse 22px 9px at 262px 18px, #e2e8ea, transparent),
    radial-gradient(ellipse 20px 9px at 332px 18px, #c9d8e2, transparent),
    linear-gradient(90deg, #7f9ec4 0, #7d9cc8 130px, #6f92c2 300px, #6c90c0 415px, #1f5591 450px, #1d5590 700px, #184a80 1000px, #174678 1150px, #5f7f9f 1240px, #4c6f96 1360px);
`;

const Logo = styled.svg`
  width: 18px;
  height: 20px;
  flex: none;
`;

const TitleText = styled.div`
  flex: 1;
  padding-left: 3px;
  font: 12px/21px ${SEGOE};
  letter-spacing: -0.19px;
  white-space: pre;
`;

const WinButtons = styled.div`
  display: flex;
  height: 18px;
  margin-right: 3px;
  border: 1px solid #1b2f48;
  border-top: 0;
  border-radius: 0 0 5px 5px;
  overflow: hidden;
  box-shadow: 0 0 0 1px #a9bfd4;
`;

const WinButton = styled.div<{ $w: number; $close?: boolean }>`
  width: ${(p) => p.$w}px;
  display: flex;
  align-items: center;
  justify-content: center;
  border-right: 1px solid ${(p) => (p.$close ? 'transparent' : '#263f5c')};
  background: ${(p) =>
    p.$close
      ? 'linear-gradient(#e0a090 0, #d07060 45%, #b02c1c 50%, #c8452c 80%, #e08a60)'
      : 'linear-gradient(#b8c8d8 0, #8fa6be 45%, #4c6c8e 50%, #5f80a2 85%, #90b0c8)'};
`;

const MenuBar = styled.div`
  height: 20px;
  flex: none;
  display: flex;
  padding-left: 4px;
  background: linear-gradient(#fff 0, #f2f4fa 6px, #d4daec 7px, #e2e6f5 18px);
  border-bottom: 1px solid #a2a2a8;
`;

const MenuItem = styled.div<{ $w: number }>`
  width: ${(p) => p.$w}px;
  font: 12px/20px ${SEGOE};
  letter-spacing: -0.25px;
  white-space: nowrap;
  & > u { text-underline-offset: 2px; }
`;

const MenuClose = styled.div`
  margin-left: auto;
  width: 26px;
  background: #f0f0f0;
  display: flex;
  align-items: center;
  justify-content: center;
  padding-left: 10px;
`;

const Toolbars = styled.div`
  height: 47px;
  flex: none;
  border-top: 1px solid #fff;
`;

const ToolRow = styled.div`
  height: 22px;
  display: flex;
  align-items: center;
`;

const Cell = styled.div<{ $w?: number }>`
  width: ${(p) => p.$w ?? 20}px;
  flex: none;
  height: 20px;
  display: flex;
  align-items: center;
  justify-content: center;
  font: 11px/20px ${UI};
`;

const Grip = styled.div<{ $w: number }>`
  width: ${(p) => p.$w}px;
  flex: none;
  height: 18px;
  background:
    repeating-linear-gradient(#f0f0f0 0 2px, transparent 2px 4px) 4px 2px / 2px 100% no-repeat,
    linear-gradient(#bcbcbc, #bcbcbc) 4px 0 / 2px 100% no-repeat;
`;

const Sep = styled.div<{ $w: number }>`
  width: ${(p) => p.$w}px;
  flex: none;
  height: 16px;
  background: linear-gradient(#9a9a9a, #9a9a9a) center / 1px 100% no-repeat;
`;

const Field = styled.div`
  width: 42px;
  flex: none;
  height: 19px;
  border: 1px solid #b4b4bc;
  background: #fff;
  padding-right: 3px;
  text-align: right;
  font: 11px/18px ${UI};
  letter-spacing: -0.25px;
`;

const Pressed = styled.div`
  width: 20px;
  height: 18px;
  display: flex;
  align-items: center;
  justify-content: center;
  border: 1px solid #444;
  border-radius: 3px;
  background: linear-gradient(#a9a9a9, #dcdcdc);
`;

/* plain strings are icons; ":n" is a grip, "|n" a separator, "=text" a field, "~text" a label, "!icon" a pressed button */
const row1: string[] = [
  ':12', 'newDoc', 'open', 'save', 'saveAll', ':12', 'cut', 'copy', 'paste', 'del', '|6', 'undo', 'redo', '|7', 'find', ':13',
  'cubeStack', 'cubeStack2', 'df1', 'df2', 'pageBolt', 'chip', 'snake', ':13', 'tools', 'helpCursor', ':13',
  'home', 'back', 'fwd', 'refresh', 'stop', ':13', 'zoomIn', 'zoomOut', '~x1', 'fit', 'sel1', 'sel2', ':13', '=200',
  'grid', 'gridSnap', '|6', 'snapObj', ':13', '=10240', '=10240', 'origin1', 'origin2', ':13', 'film1', 'film2', 'corner',
];
const row2: string[] = [
  ':12', '!pointer', '|5', 'fillA', 'fillB', ':14', 'group', 'ungroup', ':13', 'ord1', 'ord2', 'ord3', 'ord4', ':13',
  'alL', 'alC', 'alR', '|6', 'alB', 'alM', 'alT', '|6', 'dH', 'dV', ':13', '=', 'rotU', 'rotD', 'rotL', 'rotR', 'rotX', ':13',
  'flipH', 'flipV', ':13', 'flipH2', 'flipV2', ':13', 'arc1', 'arc2', 'arc3', 'arc4', ':13',
  'arc1+plusDot', 'arc2+plusDot', 'arc3+plusDot', 'arc4+plusDot', ':12', 'sc1', 'sc2', 'sc3', ':13',
  'sc1+plusTL', 'sc2+plusTL', 'sc3+plusTL',
];

const renderTool = (t: string, i: number) => {
  const rest = t.slice(1);
  switch (t[0]) {
    case ':': return <Grip key={i} $w={Number(rest)} />;
    case '|': return <Sep key={i} $w={Number(rest)} />;
    case '=': return <Field key={i}>{rest}</Field>;
    case '~': return <Cell key={i} $w={30}>{rest}</Cell>;
    case '!': return <Pressed key={i}><Icon n={rest} /></Pressed>;
    default: return <Cell key={i}><Icon n={t} /></Cell>;
  }
};

/* ---------- workspace ---------- */

const Main = styled.div`
  height: 621px;
  flex: none;
  display: flex;
`;

const LeftSide = styled.div`
  width: 1068px;
  display: flex;
  flex-direction: column;
  border-top: 3px solid #6b6b6b;
`;

const Work = styled.div`
  height: 535px;
  display: flex;
  border-bottom: 2px solid #fff;
`;

const Palette = styled.div`
  width: 215px;
  flex: none;
  padding: 2px 1px 0 3px;
  border-left: 4px solid #6b6b6b;
  border-right: 1px solid #555;
  background: linear-gradient(90deg, transparent 204px, #9c9ca0 204px, #9c9ca0 205px, #fff 205px, #fff 207px, #f0f0f0 207px);
  display: flex;
  flex-direction: column;
  position: relative;
`;

const Section = styled.div`
  width: 200px;
  border-top: 1px solid #9e9e9e;
  padding-bottom: 1px;
`;

const SectionHead = styled.div`
  height: 22px;
  padding: 5px 0 0 2px;
  display: flex;
  align-items: center;
  gap: 5px;
  font: 11px/17px ${UI};
  letter-spacing: -0.1px;
`;

type Dir = 'up' | 'down' | 'left' | 'right';
const Triangle = styled.div<{ $dir?: Dir; $s?: number; $c?: string }>`
  width: 0;
  height: 0;
  flex: none;
  ${({ $dir = 'down', $s = 4, $c = '#000' }) => {
    const edge = { down: 'top', up: 'bottom', left: 'right', right: 'left' }[$dir];
    const side = $dir === 'down' || $dir === 'up' ? ['left', 'right'] : ['top', 'bottom'];
    return css`
      border-${edge}: ${$s}px solid ${$c};
      border-${side[0]}: ${$s}px solid transparent;
      border-${side[1]}: ${$s}px solid transparent;
    `;
  }}
`;

const IconGrid = styled.div`
  display: grid;
  grid-template-columns: repeat(9, 22px);
  grid-auto-rows: 22px;
  align-items: center;
  padding-left: 2px;
`;

const PlusButton = styled.div`
  width: 16px;
  height: 16px;
  margin-top: auto;
  margin-bottom: 3px;
  border: 1px solid #555;
  border-radius: 3px;
  background: linear-gradient(#fff, #d8d8d8);
  display: flex;
  align-items: center;
  justify-content: center;
`;

const SplitMarks = styled.div`
  position: absolute;
  left: 207px;
  top: 3px;
  display: flex;
  flex-direction: column;
  gap: 5px;
`;

const sections: [string, string[]][] = [
  ['Containers', Array.from({ length: 17 }, (_, i) => `c${i + 1}`)],
  ['Interactive', Array.from({ length: 22 }, (_, i) => `i${i + 1}`)],
  ['Graphics', Array.from({ length: 13 }, (_, i) => `g${i + 1}`)],
  ['Maps', Array.from({ length: 7 }, (_, i) => `m${i + 1}`)],
  ['Utilities', Array.from({ length: 8 }, (_, i) => `u${i + 1}`)],
];

const Editor = styled.div`
  width: 853px;
  display: flex;
  flex-direction: column;
  border-right: 1px solid #777;
`;

const EditorTop = styled.div`
  display: flex;
  height: 516px;
`;

const Canvas = styled.div`
  width: 829px;
  flex: none;
  background: #000;
  position: relative;
  overflow: hidden;
  margin-top: 1px;
  font: bold 20px "DejaVu Sans Mono", monospace;
  color: #fff;
`;

const RedDash = styled.div`
  position: absolute;
  left: 0;
  top: 0;
  width: 1px;
  height: 100%;
  background: repeating-linear-gradient(#e01010 0 9px, #000 9px 14px);
`;

const Widget = styled.div<{ $x: number; $y: number; $w: number; $h: number; $raised?: boolean }>`
  position: absolute;
  left: ${(p) => p.$x}px;
  top: ${(p) => p.$y}px;
  width: ${(p) => p.$w}px;
  height: ${(p) => p.$h}px;
  border: 2px solid;
  border-color: ${(p) => (p.$raised ? '#e8e8e8 #444 #444 #e8e8e8' : '#666 #fff #fff #666')};
  background: ${(p) => (p.$raised ? 'linear-gradient(#303030, #787878 36px)' : '#000')};
  padding-left: ${(p) => (p.$raised ? 5 : 3)}px;
  line-height: 38px;
  letter-spacing: ${(p) => (p.$raised ? '-0.5px' : '0')};
  white-space: pre;
`;

const Mark = styled.div`
  position: absolute;
  left: 121px;
  top: 0;
  width: 3px;
  height: 4px;
  background: #e8e8e8;
`;

const VScroll = styled.div<{ $w?: number; $top?: number }>`
  width: ${(p) => p.$w ?? 17}px;
  flex: none;
  padding-top: ${(p) => p.$top ?? 0}px;
  background: #efefef;
  display: flex;
  flex-direction: column;
  align-items: center;
`;

const ScrollEnd = styled.div`
  width: 17px;
  height: 17px;
  flex: none;
  display: flex;
  align-items: center;
  justify-content: center;
`;

const Thumb = styled.div<{ $horizontal?: boolean; $len: number }>`
  flex: none;
  ${(p) => (p.$horizontal ? `width: ${p.$len}px; height: 15px;` : `height: ${p.$len}px; width: 15px;`)}
  border: 1px solid #8f8f93;
  border-radius: 2px;
  background: linear-gradient(${(p) => (p.$horizontal ? '180deg' : '90deg')}, #f6f6f6 0, #e6e6e6 48%, #cfcfd0 52%, #c2c2c4);
  display: flex;
  align-items: center;
  justify-content: center;
`;

const Ridges = styled.div<{ $horizontal?: boolean }>`
  width: 7px;
  height: 7px;
  background: repeating-linear-gradient(${(p) => (p.$horizontal ? '90deg' : '180deg')}, #666 0 1.5px, #eee 1.5px 3px);
`;

const HScroll = styled.div`
  height: 17px;
  display: flex;
  align-items: center;
  background: #efefef;
  width: 846px;
  padding-left: 1px;
`;

const Spacer = styled.div<{ $n?: number }>`
  flex: ${(p) => (p.$n === undefined ? '1' : `0 0 ${p.$n}px`)};
`;

const SplitH = styled.div`
  height: 6px;
  flex: none;
  border-bottom: 1px solid #666;
  display: flex;
  align-items: center;
  gap: 4px;
  padding-left: 4px;
`;

/* ---------- tabs ---------- */

const Tabs = styled.div<{ $h: number }>`
  height: ${(p) => p.$h}px;
  flex: none;
  display: flex;
  align-items: flex-end;
  padding-left: 1px;
`;

const Tab = styled.div<{ $w: number; $on?: boolean }>`
  width: ${(p) => p.$w}px;
  height: ${(p) => (p.$on ? 22 : 18)}px;
  flex: none;
  border: 1px solid #8a8c98;
  border-bottom: 0;
  margin-bottom: ${(p) => (p.$on ? -1 : 0)}px;
  background: ${(p) => (p.$on ? '#fff' : 'linear-gradient(#f4f4f4, #e6e6e6 50%, #d0d0d2)')};
  display: flex;
  align-items: center;
  justify-content: center;
  gap: 4px;
  padding: 0 2px ${(p) => (p.$on ? 1 : 0)}px 0;
  font: 11px/14px ${UI};
  letter-spacing: -0.15px;
  white-space: nowrap;
  position: relative;
`;

const ConsoleBody = styled.div`
  width: 1062px;
  margin-left: 3px;
  flex: none;
  border: 1px solid #8a8c98;
  background: #fff;
  padding: 2px 0 1px;
  height: 49px;
  display: flex;
  flex-direction: column;
`;

const ConsoleTools = styled.div`
  height: 26px;
  background: #f0f0f0;
  display: flex;
  align-items: center;
  padding-right: 10px;
`;

const ConsoleText = styled.div`
  flex: 1;
  border: 1px solid #8a8c98;
  background: #fff;
`;

const ConsoleArea = styled.div`
  flex: 1;
  border-left: 1px solid #777;
  border-bottom: 4px solid #fff;
`;

/* ---------- right side ---------- */

const Gutter = styled.div`
  width: 6px;
  flex: none;
  padding: 4px 0 0 2px;
  display: flex;
  flex-direction: column;
  gap: 4px;
`;

const RightSide = styled.div`
  width: 285px;
  flex: none;
  border-top: 2px solid #6b6b6b;
  border-left: 2px solid #6b6b6b;
  display: flex;
  flex-direction: column;
`;

const Panel = styled.div<{ $h: number }>`
  height: ${(p) => p.$h}px;
  width: 280px;
  flex: none;
  border: 1px solid #8a8c98;
  border-right-width: 2px;
  background: #fff;
  padding: 3px 0 1px 1px;
  display: flex;
`;

const PanelInner = styled.div`
  flex: 1;
  min-width: 0;
  border: 1px solid #8a8c98;
  border-right: 0;
  display: flex;
  overflow: hidden;
`;

const Tree = styled.div`
  width: 259px;
  flex: none;
  background: #fff;
`;

const TreeRoot = styled.div`
  width: 157px;
  height: 13px;
  background: #00b000;
  display: flex;
  align-items: flex-start;
  padding-left: 3px;
  gap: 9px;
  font: bold 11px/9px ${ARIAL};
  & > svg { margin-top: -3px; }
`;

const TreeRow = styled.div<{ $last?: boolean }>`
  height: 18px;
  display: flex;
  align-items: center;
  font: 11px/18px ${ARIAL};
  letter-spacing: -0.1px;
  &::before {
    content: '';
    width: 11px;
    height: 18px;
    margin-left: 8px;
    margin-right: 3px;
    background:
      repeating-linear-gradient(#777 0 1px, transparent 1px 2px) 0 0 / 1px ${(p) => (p.$last ? 9 : 18)}px no-repeat,
      repeating-linear-gradient(90deg, #777 0 1px, transparent 1px 2px) 0 9px / 11px 1px no-repeat;
  }
  & > span { margin-left: 24px; }
`;

const PropTable = styled.div`
  width: 274px;
  background: #f0f0f0;
`;

const PropHead = styled.div`
  height: 25px;
  display: grid;
  grid-template-columns: 130px 144px;
  background: linear-gradient(#fff 0, #fff 9px, #f2f3f5 10px, #eceef0);
  border-bottom: 1px solid #d6d6da;
  & > div { border-right: 1px solid #d0d2d6; }
`;

const PropRow = styled.div<{ $grey?: boolean }>`
  height: 20px;
  display: grid;
  grid-template-columns: 130px 144px;
  grid-template-rows: 19px;
  border-bottom: 1px solid #b4b4b4;
  background: #fff;
`;

const PropName = styled.div`
  border-right: 1px solid #b4b4b4;
  display: flex;
  align-items: center;
  padding-top: 1px;
  font: 11px/18px ${ARIAL};
  white-space: nowrap;
`;

const PropValue = styled.div<{ $grey?: boolean }>`
  border-right: 1px solid #b4b4b4;
  padding-left: 2px;
  font: 11px/18px ${UI};
  letter-spacing: -0.28px;
  white-space: nowrap;
  background: ${(p) => (p.$grey ? '#f0f0f0' : '#fff')};
`;

const Branch = styled.div<{ $last?: boolean }>`
  width: 11px;
  height: 20px;
  margin-left: 27px;
  background:
    repeating-linear-gradient(#777 0 1px, transparent 1px 2px) 0 0 / 1px ${(p) => (p.$last ? 11 : 20)}px no-repeat,
    repeating-linear-gradient(90deg, #777 0 1px, transparent 1px 2px) 0 10px / 11px 1px no-repeat;
`;

const Collapse = styled.div`
  width: 9px;
  height: 9px;
  margin: 1px 2px 0 4px;
  border: 1px solid #8a8a8a;
  background: linear-gradient(#3458a8, #3458a8) center / 5px 1px no-repeat, #eee;
`;

const Dots = styled.div`
  width: 5px;
  height: 1px;
  margin-top: 1px;
  background: repeating-linear-gradient(90deg, #777 0 1px, transparent 1px 2px);
`;

const tree: [string, string][] = [
  ['i10', '[1] PbNB'], ['i10', '[2] PbBR'], ['i10', '[3] PbSCD'], ['i10', '[4] PbOC'], ['i16', '[5] CbDisaster'], ['g8', '[6] Title'],
  ['i10', '[15] PushButton'], ['i10', '[16] PushButton'], ['i10', '[17] PushButton'], ['i5', '[18] EditBoxText'], ['g8', '[19] Description'],
  ['i5', '[32] Data Fato'], ['i5', '[33] Data I Aten'], ['i5', '[34] Data F Aten'], ['i5', '[35] RG'], ['i5', '[36] Hora Fato'],
  ['i5', '[37] Hora I Aten'], ['i5', '[38] Hora F Aten'], ['i10', '[39] enviar'],
];

/* ---------- status bar and taskbar ---------- */

const StatusBar = styled.div`
  height: 18px;
  flex: none;
  display: flex;
  border-top: 1px solid #a8a8ac;
  border-bottom: 1px solid #a8a8ac;
`;

const StatusCell = styled.div<{ $w: number }>`
  width: ${(p) => p.$w}px;
  border-right: 2px solid #a8a8ac;
  padding: 0 0 1px 3px;
  font: bold 11px/15px ${ARIAL};
  letter-spacing: -0.1px;
  display: flex;
  align-items: center;
`;

const StatusIcons = styled.div`
  flex: 1;
  background: #fff;
  display: flex;
  align-items: center;
  gap: 5px;
  padding-left: 4px;
`;

const Taskbar = styled.div`
  height: 40px;
  flex: none;
  position: relative;
  display: flex;
  align-items: center;
  border-top: 1px solid #1c3350;
  background: linear-gradient(90deg, #21517f 0, #1f6398 60px, #2a7fb8 110px, #3a96c8 300px, #46a3d4 440px, #2f90cc 540px, #2c86c8 680px, #2474bc 900px, #1d62a8 1020px, #17447c 1100px, #123a6c 1360px);
`;

const Swoosh = styled.svg`
  position: absolute;
  left: 0;
  top: 0;
  width: 1360px;
  height: 39px;
`;

const TaskGrip = styled.div`
  width: 9px;
  height: 30px;
  flex: none;
  background: radial-gradient(circle at 1px 1px, #0c2a4c 0.9px, transparent 1.2px) 0 0 / 3px 4px;
  position: relative;
`;

const TaskButton = styled.div<{ $flat?: boolean; $active?: boolean }>`
  width: 60px;
  height: 39px;
  flex: none;
  margin-right: 2px;
  position: relative;
  display: flex;
  align-items: center;
  justify-content: center;
  ${(p) =>
    !p.$flat &&
    css`
      border: 1px solid #173f66;
      border-radius: 3px;
      box-shadow: inset 0 0 0 1px rgba(255, 255, 255, 0.55);
      background: ${p.$active
        ? 'linear-gradient(115deg, rgba(255,255,255,.85), rgba(255,255,255,.45) 55%, rgba(255,255,255,.2))'
        : 'linear-gradient(120deg, rgba(255,255,255,.5), rgba(255,255,255,.2) 50%, rgba(255,255,255,.1))'};
    `}
`;

const BigIcon = styled.svg`
  width: 32px;
  height: 32px;
  display: block;
`;

const Orb = styled.svg`
  width: 40px;
  height: 39px;
  margin-left: 7px;
  flex: none;
  position: relative;
`;

const Tray = styled.div`
  position: relative;
  display: flex;
  align-items: center;
  height: 39px;
  flex: 1;
  color: #fff;
  font: 12px/17px ${SEGOE};
`;

const TraySvg = styled.svg<{ $w: number; $m: number }>`
  width: ${(p) => p.$w}px;
  height: 16px;
  margin: 1px 0 0 ${(p) => p.$m}px;
  flex: none;
`;

const Lang = styled.div`
  width: 15px;
  margin: -5px 0 0 9px;
`;

const Clock = styled.div`
  width: 64px;
  margin-left: 15px;
  text-align: center;
  letter-spacing: -0.45px;
  white-space: nowrap;
`;

const ShowDesktop = styled.div`
  margin-left: auto;
  width: 14px;
  height: 39px;
  border: 1px solid #0b1f3c;
  box-shadow: inset 1px 1px 0 #6f8db0;
  background: linear-gradient(#5d7ea6, #1f4474 50%, #123260);
`;

const Orbit = ({ ball, hi }: { ball: string; hi: string }) => (
  <BigIcon viewBox="0 0 34 34">
    <path d="M6 28Q-1 13 12 8q6-2 16-2" stroke="#d86828" strokeWidth="2.300" fill="none" />
    <path d="M22 3l11 2-9 5 2-4z" fill="#f08030" />
    <circle cx="17" cy="23.500" r="7.500" fill={ball} />
    <circle cx="14.500" cy="21" r="3.300" fill={hi} opacity=".75" />
  </BigIcon>
);

/* label split around its mnemonic letter, then the slot width */
const menus: [string, string, string, number][] = [
  ['', 'F', 'ile', 27], ['', 'E', 'dit', 29], ['', 'V', 'iew', 33], ['', 'L', 'ayer', 37], ['', 'O', 'bject', 43],
  ['T', 'r', 'ansform', 63], ['', 'P', 'roject', 45], ['', 'T', 'ools', 37], ['', 'W', 'indow', 53], ['', 'H', 'elp', 30],
];

export default function App() {
  return (
    <Screen>
      <Global />
      <Defs />
      <TitleBar>
        <Logo viewBox="0 0 18 20">
          <path d="M1 13Q1 5 14 5" stroke="#e87818" strokeWidth="1.800" fill="none" />
          <path d="M11 2l5 3-5 2z" fill="#e87818" />
          <circle cx="7.500" cy="13.500" r="4" fill="#f8d040" />
          <circle cx="6.500" cy="12.500" r="1.600" fill="#fff6b8" />
        </Logo>
        <TitleText>{'SCADE Display - UA Page Creator - C:\\Users\\Goku\\Desktop\\scade\\BO\\BO.sgfx'}</TitleText>
        <WinButtons>
          <WinButton $w={28}><Svg viewBox="0 0 12 12" $s={12}><path d="M1 6h10v4H1z" fill="#fff" stroke="#334" strokeWidth=".6" /></Svg></WinButton>
          <WinButton $w={27}><Svg viewBox="0 0 12 12" $s={12}><path d="M4 1.500h7v7H9M1.500 4h7v7h-7zM4 6.500h2v2H4z" fill="none" stroke="#fff" strokeWidth="1.500" /></Svg></WinButton>
          <WinButton $w={47} $close><Svg viewBox="0 0 12 12" $s={12}><path d="M2 2l8 8M10 2l-8 8" stroke="#445" strokeWidth="4" /><path d="M2 2l8 8M10 2l-8 8" stroke="#fff" strokeWidth="2.500" /></Svg></WinButton>
        </WinButtons>
      </TitleBar>
      <MenuBar>
        {menus.map(([a, u, b, w]) => <MenuItem key={a + u + b} $w={w}>{a}<u>{u}</u>{b}</MenuItem>)}
        <MenuClose><Svg viewBox="0 0 8 8" $s={8}><path d="M1 1l6 6M7 1 1 7" stroke="#666660" strokeWidth="1.800" /></Svg></MenuClose>
      </MenuBar>
      <Toolbars>
        <ToolRow>{row1.map(renderTool)}</ToolRow>
        <ToolRow>{row2.map(renderTool)}</ToolRow>
      </Toolbars>

      <Main>
        <LeftSide>
          <Work>
            <Palette>
              {sections.map(([name, list]) => (
                <Section key={name}>
                  <SectionHead><Triangle $s={4.5} />{name}</SectionHead>
                  <IconGrid>{list.map((n) => <Icon key={n} n={n} />)}</IconGrid>
                </Section>
              ))}
              <Section />
              <PlusButton><Svg viewBox="0 0 8 8" $s={8}><path d="M4 0v8M0 4h8" stroke="#000" strokeWidth="1.600" /></Svg></PlusButton>
              <SplitMarks><Triangle $dir="left" $s={3.5} /><Triangle $dir="right" $s={3.5} /></SplitMarks>
            </Palette>
            <Editor>
              <EditorTop>
                <Canvas>
                  <RedDash />
                  <Widget $x={29} $y={-20} $w={277} $h={33} $raised />
                  <Mark />
                  <Widget $x={342} $y={-40} $w={520} $h={198} />
                  <Widget $x={342} $y={180} $w={151} $h={41}>Data Fato</Widget>
                  <Widget $x={342} $y={230} $w={151} $h={41}>Data I Aten</Widget>
                  <Widget $x={342} $y={280} $w={151} $h={41}>Data F Aten</Widget>
                  <Widget $x={342} $y={330} $w={151} $h={41}>RG</Widget>
                  <Widget $x={650} $y={180} $w={151} $h={41}>Hora Fato</Widget>
                  <Widget $x={650} $y={230} $w={151} $h={41}>Hora I Aten</Widget>
                  <Widget $x={650} $y={280} $w={151} $h={41}>Hora F Aten</Widget>
                  <Widget $x={517} $y={477} $w={82} $h={42} $raised>Enviar</Widget>
                </Canvas>
                <VScroll $top={2}>
                  <ScrollEnd><Triangle $dir="up" $c="#444" $s={3.5} /></ScrollEnd>
                  <Spacer $n={176} />
                  <Thumb $len={239}><Ridges /></Thumb>
                  <Spacer />
                  <ScrollEnd><Triangle $c="#444" $s={3.5} /></ScrollEnd>
                </VScroll>
              </EditorTop>
              <HScroll>
                <ScrollEnd><Triangle $dir="left" $c="#333" $s={3.5} /></ScrollEnd>
                <Thumb $horizontal $len={655}><Ridges $horizontal /></Thumb>
                <Spacer />
                <ScrollEnd><Triangle $dir="right" $c="#333" $s={3.5} /></ScrollEnd>
              </HScroll>
            </Editor>
          </Work>
          <SplitH><Triangle $dir="up" /><Triangle /></SplitH>
          <ConsoleArea>
            <Tabs $h={23}>
              <Spacer $n={2} />
              <Tab $w={73}><Icon n="problems" s={15} />Problems</Tab>
              <Tab $w={70} $on><Icon n="console" s={15} />Console</Tab>
            </Tabs>
            <ConsoleBody>
              <ConsoleTools>
                <Grip $w={20} />
                <Spacer />
                <Icon n="lock" />
                <Spacer $n={13} />
                <Icon n="eraser" />
                <Spacer $n={11} />
                <Icon n="spinner" />
              </ConsoleTools>
              <ConsoleText />
            </ConsoleBody>
          </ConsoleArea>
        </LeftSide>

        <Gutter><Triangle $dir="left" /><Triangle $dir="right" /></Gutter>

        <RightSide>
          <Tabs $h={21}>
            <Tab $w={58} $on>Structure</Tab>
            <Tab $w={61}>Navigation</Tab>
            <Tab $w={42}>History</Tab>
          </Tabs>
          <Panel $h={363}>
            <PanelInner>
              <Tree>
                <TreeRoot><Icon n="layer" /><span>a661_layer</span></TreeRoot>
                {tree.map(([ic, label], i) => (
                  <TreeRow key={label} $last={i === tree.length - 1}><Icon n={ic} /><span>{label}</span></TreeRow>
                ))}
              </Tree>
              <VScroll $w={15}>
                <ScrollEnd><Triangle $dir="up" $c="#444" $s={3.5} /></ScrollEnd>
                <Spacer $n={6} />
                <Thumb $len={314}><Ridges /></Thumb>
                <Spacer />
                <ScrollEnd><Triangle $c="#444" $s={3.5} /></ScrollEnd>
              </VScroll>
            </PanelInner>
          </Panel>
          <SplitH><Triangle $dir="up" $s={3.5} /><Triangle $s={3.5} /></SplitH>
          <Tabs $h={21}>
            <Tab $w={62} $on>Properties</Tab>
            <Tab $w={66}>Comments</Tab>
            <Tab $w={69}>Traceability</Tab>
          </Tabs>
          <Panel $h={203}>
            <PanelInner>
              <PropTable>
                <PropHead><div /><div /></PropHead>
                <PropRow><PropName>Container</PropName><PropValue /></PropRow>
                <PropRow><PropName><Collapse /><Dots /></PropName><PropValue /></PropRow>
                {[['Layer Id', '1'], ['Context Number', '0'], ['Ratio', '20 x 20'], ['User unit', '20480 x 20480'], ['Specification size', '1024 x 1024 pixels']].map(([k, v], i) => (
                  <PropRow key={k}><PropName><Branch $last={i === 4} />{k}</PropName><PropValue $grey={i > 1}>{v}</PropValue></PropRow>
                ))}
              </PropTable>
            </PanelInner>
          </Panel>
        </RightSide>
      </Main>

      <StatusBar>
        <StatusCell $w={13}><Icon n="save" s={10} /></StatusCell>
        <StatusCell $w={200}>(11560, 7740)</StatusCell>
        <StatusCell $w={350} />
        <StatusCell $w={760} />
        <StatusIcons><Icon n="shapes" s={13} /><Icon n="status" s={12} /></StatusIcons>
      </StatusBar>

      <Taskbar>
        <Swoosh viewBox="0 0 1360 39" preserveAspectRatio="none">
          <path d="M450 18Q600 28 780 1" stroke="#5fb2e2" strokeWidth="5" opacity=".3" fill="none" />
          <path d="M490 40Q560 12 640-1" stroke="#7cc4ea" strokeWidth="5" opacity=".3" fill="none" />
          <path d="M903-3Q950 8 975 41" stroke="#9cc8f0" strokeWidth="9" opacity=".35" fill="none" />
          <path d="M903-3Q950 8 975 41" stroke="#c0def8" strokeWidth="4" opacity=".8" fill="none" />
        </Swoosh>
        <Orb viewBox="0 0 40 39">
          <defs>
            <radialGradient id="orb" cx=".5" cy="1" r=".9"><stop offset="0" stopColor="#35d0ff" /><stop offset=".5" stopColor="#1b6ab0" /><stop offset="1" stopColor="#15365c" /></radialGradient>
          </defs>
          <circle cx="20" cy="19.500" r="18" fill="url(#orb)" stroke="#7fb4d8" strokeWidth="1" />
          <path d="M4 14Q20-7 36 14 20 20 4 14z" fill="#fff" opacity=".35" />
          <path d="M12 11q4-3 8-1l-2 8q-4-2-8 0z" fill="#e8562c" />
          <path d="M21.500 10.500q4 2 9 0l-2.500 8q-4 2-8.500 0z" fill="#86c440" />
          <path d="M9.500 19.500q4-2 8 0l-2 8q-4-2-8.500 0z" fill="#3f90dc" />
          <path d="M19 20q4 2 8.500 0l-2 8q-4 2-9 0z" fill="#fcc934" />
        </Orb>
        <Spacer $n={11} />
        <TaskGrip />
        <Spacer $n={8} />
        <TaskButton $flat>
          <BigIcon viewBox="0 0 34 34">
            <path d="M3 5q0-3 3-3h8l2 3h14q3 0 3 3v20H3z" fill="#e8cc70" stroke="#a88830" />
            <path d="M7 4h4v3H7z" fill="#38b838" /><path d="M14 6h4v3h-4z" fill="#d83828" /><path d="M22 7h4v3h-4z" fill="#3888d8" />
            <path d="M2 11h12l2-2h16v20H2z" fill="#fbe9a2" stroke="#c0a048" strokeWidth=".8" />
            <path d="M7 32V24q0-4 4-4h15q4 0 4 4v8h-5v-7H12v7z" fill="#a8d8f0" stroke="#4f90b8" strokeWidth=".8" opacity=".9" />
            <path d="M8 16v10M4 21h9" stroke="#fff" opacity=".9" />
          </BigIcon>
        </TaskButton>
        <TaskButton>
          <BigIcon viewBox="1 1 32 32">
            <circle cx="17" cy="17" r="14.500" fill="#f8cc28" />
            <path d="M17 2.500a14.500 14.500 0 0112.600 7.300H17a7.300 7.300 0 00-6.800 5L4.500 9.700A14.500 14.500 0 0117 2.500z" fill="#d83828" />
            <path d="M4.500 9.700l6 10.700a7.300 7.300 0 008 3.800L14.700 31.300A14.500 14.500 0 014.500 9.700z" fill="#40a848" />
            <circle cx="17" cy="17" r="6.800" fill="#f4f4f4" /><circle cx="17" cy="17" r="5.300" fill="#2f74c8" />
          </BigIcon>
        </TaskButton>
        <TaskButton><Orbit ball="#2f98f0" hi="#d8f0ff" /></TaskButton>
        <TaskButton>
          <BigIcon viewBox="1 1 32 32">
            <path d="M1 1h25v6h7v26H1z" fill="#f58a1f" /><path d="M27.500 1l5.500 5.500h-5.500z" fill="#f58a1f" />
            <path d="M4 17 17 4l13 13-9 9h-8z" fill="#f9a850" />
            <path d="M23.500 9.500Q19 5 13 8.500q-5 4-3 9.500 3 6 9 4 5-3 4-8-4-2-6 1" stroke="#fff" strokeWidth="3.600" fill="none" />
            <text x="17" y="31.500" fontSize="6.500" fontWeight="bold" fill="#fff" textAnchor="middle" fontFamily="Liberation Sans">PDF</text>
          </BigIcon>
        </TaskButton>
        <TaskButton>
          <BigIcon viewBox="0 0 34 34">
            <path d="M3 22Q2 10 15 6q13-2 14 8 0 6-5 7-4 1-4 5 0 6-8 5-8-2-9-9z" fill="#e9f3fb" stroke="#8fb4d0" />
            <circle cx="7" cy="20" r="2.800" fill="#e04848" /><circle cx="12" cy="14" r="2.800" fill="#58b848" /><circle cx="19" cy="11" r="2.800" fill="#f0c040" /><circle cx="15" cy="21" r="2.600" fill="#4898d8" />
            <path d="M28 8 19 32l3 0 9-22z" fill="#e88a30" stroke="#a85a18" strokeWidth=".6" /><path d="M27 9q-3-5 3-9 6 4 3 10z" fill="#b89468" />
          </BigIcon>
        </TaskButton>
        <TaskButton $active><Orbit ball="#1c2c40" hi="#b8c8d8" /></TaskButton>
        <Spacer $n={635} />
        <Tray>
          <TaskGrip />
          <Lang>PT</Lang>
          <TraySvg viewBox="0 0 16 16" $w={16} $m={6}><path d="M1 6h14v7H1z" fill="#b8b8b8" stroke="#ddd" /><path d="M3 8h10M3 10h10" stroke="#555" strokeDasharray="1 1" /><path d="M5 5q1-3 4-2t4-2" stroke="#bbb" fill="none" /></TraySvg>
          <TraySvg viewBox="0 0 8 16" $w={8} $m={12}><path d="M0 11 4 7l4 4z" fill="#fff" /></TraySvg>
          <TraySvg viewBox="0 0 16 16" $w={16} $m={12}><path d="M1 2.500l6-1v6H1zM8 1.300 15.500 0v7.500H8zM1 8.500h6v6l-6-1zM8 8.500h7.500V16L8 14.700z" fill="#fff" /></TraySvg>
          <TraySvg viewBox="0 0 16 16" $w={16} $m={9}><path d="M2 0v16" stroke="#fff" strokeWidth="1.500" /><path d="M4 2q3-1 5 1t5 0v7H4z" fill="#e8eef4" /><circle cx="11" cy="11" r="4.500" fill="#d82820" /><path d="M9 9l4 4M13 9l-4 4" stroke="#fff" strokeWidth="1.500" /></TraySvg>
          <TraySvg viewBox="0 0 16 16" $w={16} $m={8}><path d="M1 12h2v3H1zM4 10h2v5H4zM7 8h2v7H7zM10 5h2v10h-2zM13 3h2v12h-2z" fill="#fff" /></TraySvg>
          <TraySvg viewBox="0 0 16 16" $w={16} $m={8}><path d="M1 5h3l4-4v14l-4-4H1z" fill="#fff" /><path d="M10 5q2 3 0 6M12 3q3 5 0 10" stroke="#fff" strokeWidth="1.200" fill="none" /></TraySvg>
          <Clock>01:11<br />14/09/2015</Clock>
          <ShowDesktop />
        </Tray>
      </Taskbar>
    </Screen>
  );
}
